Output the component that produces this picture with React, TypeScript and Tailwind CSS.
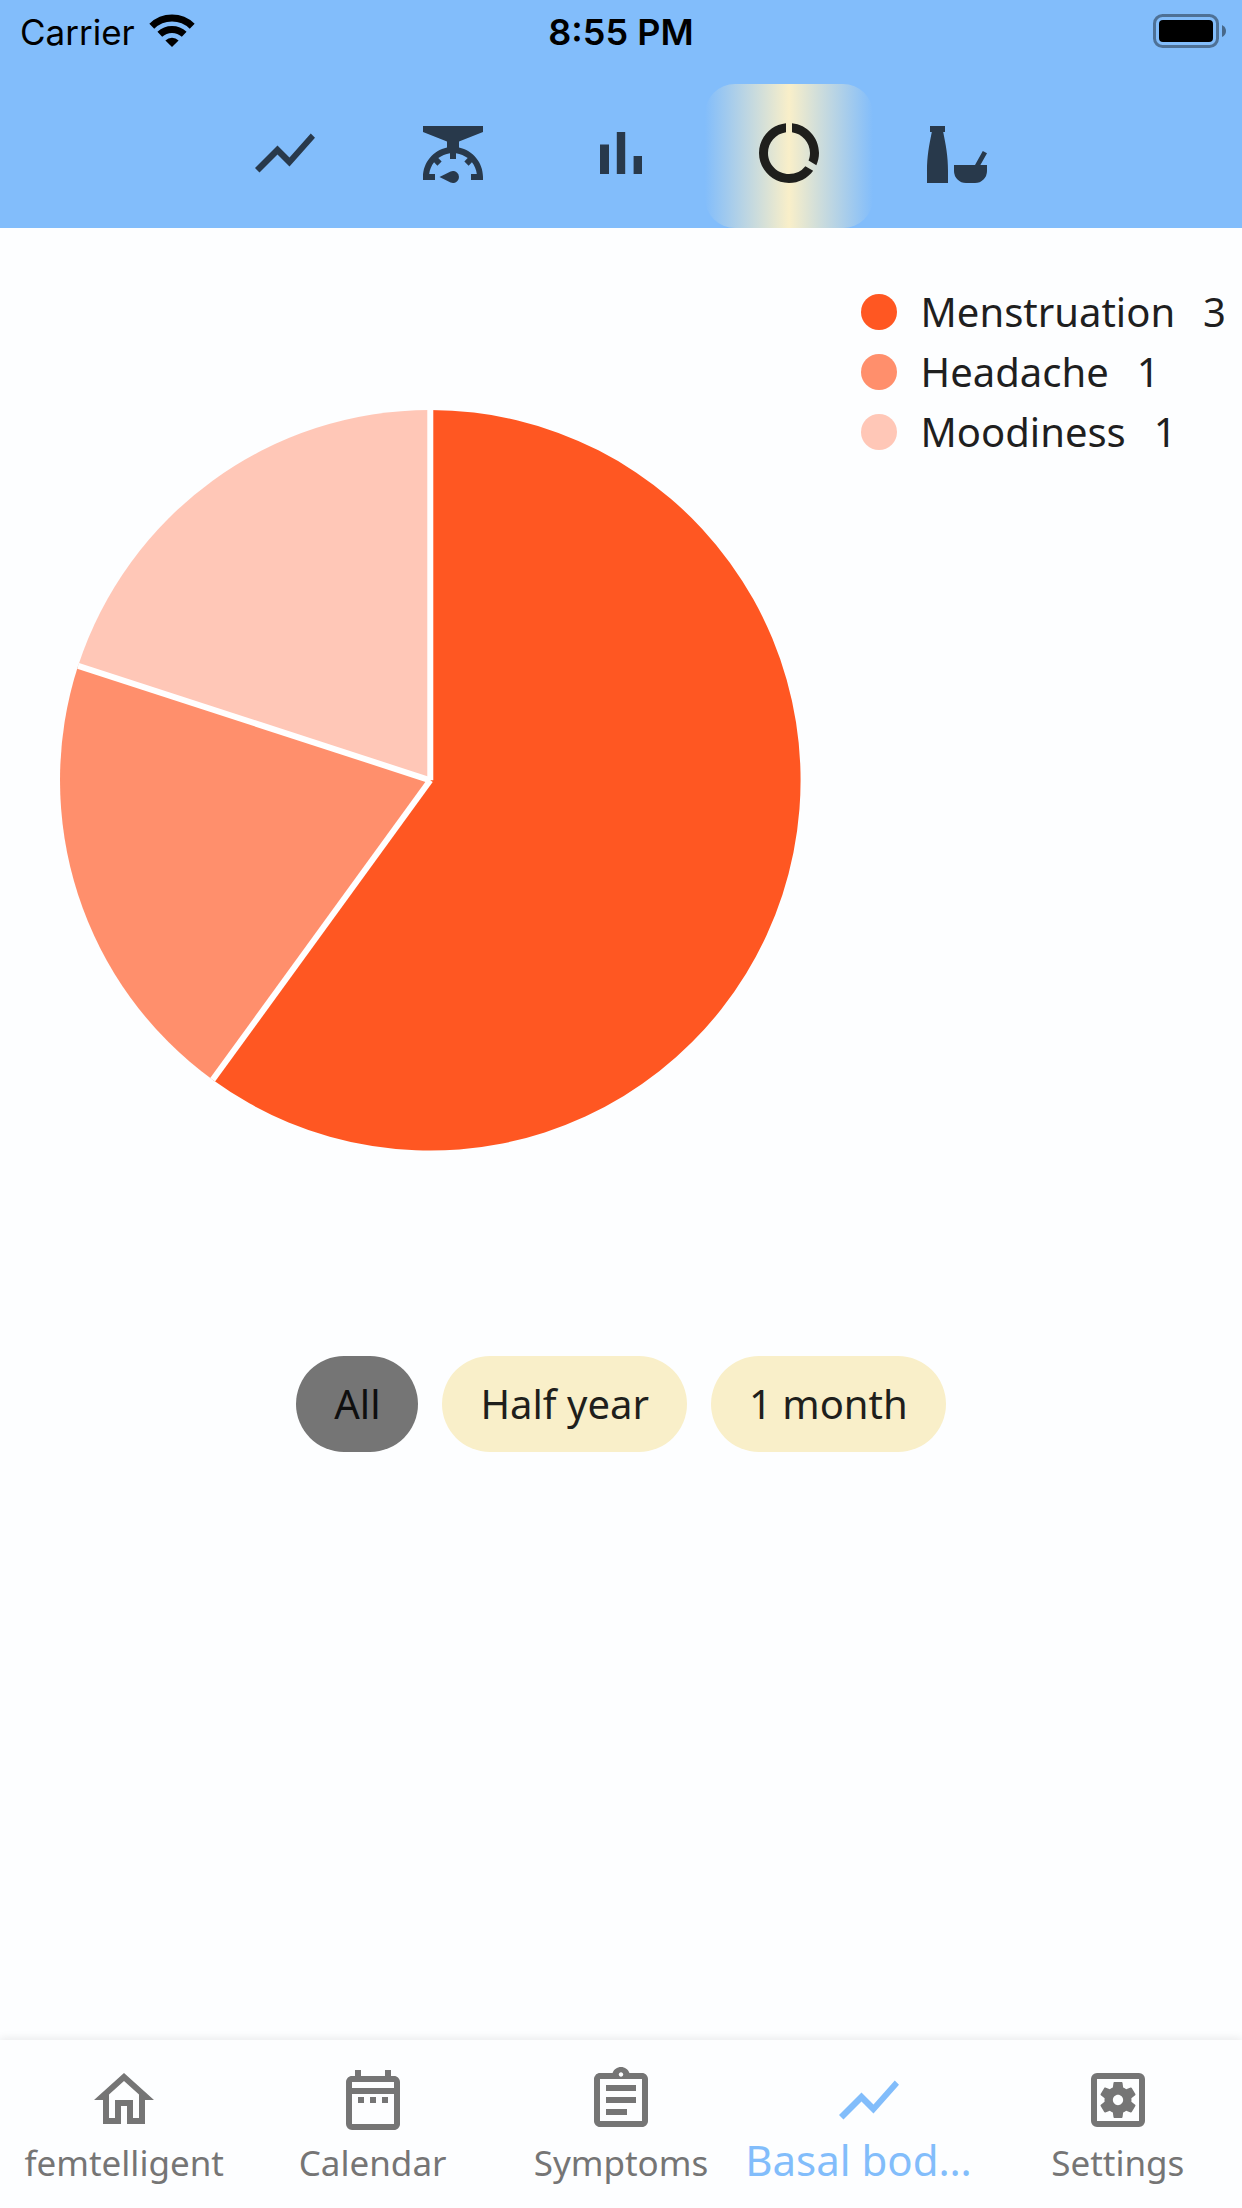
import { useState } from "react";
import type { ReactNode } from "react";
import {
  MdDataUsage,
  MdOutlineAssignment,
  MdOutlineDateRange,
  MdOutlineHome,
  MdOutlineSettingsApplications,
  MdShowChart,
} from "react-icons/md";

function ScaleIcon() {
  return (
    <svg viewBox="0 0 24 24" className="size-[72px]" fill="currentColor" aria-hidden="true">
      <path d="M2 3H22V5L14 8.2V10.2C18.6 11.2 22 15.200 22 20V21H18V19H19.940C19.750 17.540 19.170 16.200 18.310 15.100L17.200 16.210L15.790 14.800L16.900 13.690C15.810 12.840 14.470 12.250 13 12.060V14H11V12.060C9.530 12.250 8.190 12.840 7.100 13.690L8.210 14.800L6.800 16.210L5.690 15.100C4.830 16.200 4.250 17.540 4.060 19H6V21H2V20C2 15.200 5.400 11.200 10 10.200V8.200L2 5Z" />
      <path d="M7.500 20L11.200 18.160A2 2 0 1 1 11.200 21.840Z" />
    </svg>
  );
}

function BarsIcon() {
  return (
    <svg viewBox="0 0 24 24" className="size-[72px]" fill="currentColor" aria-hidden="true">
      <path d="M5 9.2H8V19H5ZM10.600 5H13.400V19H10.600ZM16.200 13H19V19H16.200Z" />
    </svg>
  );
}

function MedicineIcon() {
  return (
    <svg viewBox="0 0 24 24" className="size-[72px]" fill="currentColor" aria-hidden="true">
      <path d="M3 3H8V5H7.400C8.300 9.500 9 13 9 18V22H2V18C2 13 2.700 9.500 3.600 5H3Z" />
      <path d="M11 16H18L20.600 11.300L22 12.100L19.800 16H22V18A4 4 0 0 1 18 22H15A4 4 0 0 1 11 18Z" />
    </svg>
  );
}

function WifiIcon() {
  return (
    <svg viewBox="0 0 46 34" className="h-[34px] w-[46px]" aria-hidden="true">
      <g fill="none" stroke="currentColor" strokeWidth="7">
        <path d="M2.800 12.200A29 29 0 0 1 43.200 12.200" />
        <path d="M10.800 20.200A18 18 0 0 1 35.200 20.200" />
      </g>
      <path fill="currentColor" d="M16.400 26.400A9.500 9.500 0 0 1 29.600 26.400L23 33Z" />
    </svg>
  );
}

function BatteryIcon() {
  return (
    <svg viewBox="0 0 74 34" className="h-[34px] w-[74px]" role="img" aria-label="Battery full">
      <rect x="1.500" y="1.500" width="63" height="31" rx="8" fill="none" stroke="#000" strokeOpacity="0.4" strokeWidth="3" />
      <rect x="6" y="6" width="54" height="22" rx="4" />
      <path d="M69 11Q73 13 73 17T69 23Z" fillOpacity="0.45" />
    </svg>
  );
}

const symptoms = [
  { name: "Menstruation", count: 3, color: "#ff5722" },
  { name: "Headache", count: 1, color: "#ff8f6c" },
  { name: "Moodiness", count: 1, color: "#ffc7b7" },
];

function PieChart() {
  const total = symptoms.reduce((sum, s) => sum + s.count, 0);
  const point = (share: number) => {
    const angle = share * 2 * Math.PI;
    return [371 + 371 * Math.sin(angle), 371 - 371 * Math.cos(angle)];
  };
  let seen = 0;
  const slices = symptoms.map((s) => {
    const from = seen / total;
    seen += s.count;
    return { ...s, start: point(from), end: point(seen / total), large: s.count / total > 0.5 ? 1 : 0 };
  });
  return (
    <svg viewBox="0 0 742 742" className="block w-full" role="img" aria-label="Symptom shares">
      {slices.map((s) => (
        <path
          key={s.name}
          fill={s.color}
          d={`M371 371L${s.start[0]} ${s.start[1]}A371 371 0 ${s.large} 1 ${s.end[0]} ${s.end[1]}Z`}
        />
      ))}
      {slices.map((s) => (
        <line key={s.name} x1="371" y1="371" x2={s.start[0]} y2={s.start[1]} stroke="#fff" strokeWidth="6" />
      ))}
    </svg>
  );
}

const tabs: { name: string; icon: ReactNode }[] = [
  { name: "Temperature", icon: <MdShowChart size={72} /> },
  { name: "Weight", icon: <ScaleIcon /> },
  { name: "Cycle length", icon: <BarsIcon /> },
  { name: "Symptoms share", icon: <MdDataUsage size={72} /> },
  { name: "Medicine", icon: <MedicineIcon /> },
];

const ranges = ["All", "Half year", "1 month"];

const destinations: { name: string; icon: ReactNode }[] = [
  { name: "femtelligent", icon: <MdOutlineHome size={72} /> },
  { name: "Calendar", icon: <MdOutlineDateRange size={72} /> },
  { name: "Symptoms", icon: <MdOutlineAssignment size={72} /> },
  { name: "Basal bod…", icon: <MdShowChart size={72} /> },
  { name: "Settings", icon: <MdOutlineSettingsApplications size={72} /> },
];

export default function App() {
  const [tab, setTab] = useState(3);
  const [range, setRange] = useState(0);

  return (
    <div className="flex min-h-screen flex-col bg-[#fdfeff] font-['Noto_Sans',sans-serif] text-[#1f1f1f]">
      <header className="bg-[#82bdfb]">
        <div className="grid h-[60px] grid-cols-3 items-center px-5 font-['Inter',sans-serif] leading-[60px] text-black">
          <div className="flex items-center gap-3.5 text-[35px]">
            <span className="pt-0.5">Carrier</span>
            <WifiIcon />
          </div>
          <span className="pt-0.5 text-center text-[36px] font-semibold">8:55 PM</span>
          <div className="-mr-[5px] flex justify-end">
            <BatteryIcon />
          </div>
        </div>
        <div role="tablist" className="mt-6 flex justify-center">
          {tabs.map((t, i) => (
            <button
              key={t.name}
              type="button"
              role="tab"
              aria-label={t.name}
              aria-selected={i === tab}
              onClick={() => setTab(i)}
              className={
                i === tab
                  ? "flex h-36 w-[168px] items-center justify-center rounded-[30px] bg-[linear-gradient(to_right,#82bdfb,#f9efc9,#82bdfb)] pb-1.5 text-[#1f1f1c]"
                  : "flex h-36 w-[168px] items-center justify-center pb-1.5 text-[#28394b]"
              }
            >
              {t.icon}
            </button>
          ))}
        </div>
      </header>

      <main className="flex-1">
        <section className="flex items-start">
          <div className="mt-[182px] min-w-0 flex-1 px-[60px]">
            <PieChart />
          </div>
          <ul className="mt-[54px] pr-4">
            {symptoms.map((s) => (
              <li key={s.name} className="flex h-[60px] items-center text-[40px] leading-[60px]">
                <span className="mr-6 size-9 rounded-full" style={{ backgroundColor: s.color }} />
                <span>{s.name}</span>
                <span className="ml-7">{s.count}</span>
              </li>
            ))}
          </ul>
        </section>

        <div className="mt-[205px] flex justify-center gap-6">
          {ranges.map((r, i) => (
            <button
              key={r}
              type="button"
              aria-pressed={i === range}
              onClick={() => setRange(i)}
              className={
                i === range
                  ? "h-24 rounded-full bg-[#757575] px-[38px] text-[40px] text-[#0f0f0f]"
                  : "h-24 rounded-full bg-[#f9efc9] px-[38px] text-[40px] text-[#1f1f1c]"
              }
            >
              {r}
            </button>
          ))}
        </div>
      </main>

      <nav className="grid h-[168px] grid-cols-5 bg-[#fdfeff] shadow-[0_-2px_8px_rgba(0,0,0,0.08)]">
        {destinations.map((d, i) => (
          <a
            key={d.name}
            href="#"
            aria-current={i === 3 ? "page" : undefined}
            className={
              i === 3
                ? "flex flex-col items-center whitespace-nowrap pt-6 text-[42px] leading-[48px] text-[#82bdfb]"
                : "flex flex-col items-center whitespace-nowrap pt-6 text-[35px] leading-[54px] text-[#757575]"
            }
          >
            {d.icon}
            <span className={i === 3 ? "self-start" : undefined}>{d.name}</span>
          </a>
        ))}
      </nav>
    </div>
  );
}
